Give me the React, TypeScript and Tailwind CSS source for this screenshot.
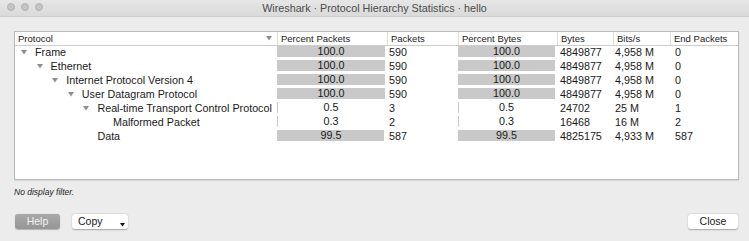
import React from "react";

type Row = {
  name: string;
  level: number;
  open: boolean;
  pp: string;
  ppBar: number;
  packets: string;
  pb: string;
  pbBar: number;
  bytes: string;
  bits: string;
  end: string;
};

const rows: Row[] = [
  { name: "Frame", level: 0, open: true, pp: "100.0", ppBar: 100, packets: "590", pb: "100.0", pbBar: 100, bytes: "4849877", bits: "4,958 M", end: "0" },
  { name: "Ethernet", level: 1, open: true, pp: "100.0", ppBar: 100, packets: "590", pb: "100.0", pbBar: 100, bytes: "4849877", bits: "4,958 M", end: "0" },
  { name: "Internet Protocol Version 4", level: 2, open: true, pp: "100.0", ppBar: 100, packets: "590", pb: "100.0", pbBar: 100, bytes: "4849877", bits: "4,958 M", end: "0" },
  { name: "User Datagram Protocol", level: 3, open: true, pp: "100.0", ppBar: 100, packets: "590", pb: "100.0", pbBar: 100, bytes: "4849877", bits: "4,958 M", end: "0" },
  { name: "Real-time Transport Control Protocol", level: 4, open: true, pp: "0.5", ppBar: 0.5, packets: "3", pb: "0.5", pbBar: 0.5, bytes: "24702", bits: "25 M", end: "1" },
  { name: "Malformed Packet", level: 5, open: false, pp: "0.3", ppBar: 0.3, packets: "2", pb: "0.3", pbBar: 0.3, bytes: "16468", bits: "16 M", end: "2" },
  { name: "Data", level: 4, open: false, pp: "99.5", ppBar: 99.5, packets: "587", pb: "99.5", pbBar: 99.5, bytes: "4825175", bits: "4,933 M", end: "587" },
];

const cols = "grid grid-cols-[262px_110px_71px_99px_56px_57px_68px]";

function Arrow() {
  return (
    <svg width="6" height="5" viewBox="0 0 6 5" className="shrink-0">
      <polygon points="0,0 6,0 3,4.5" fill="#8e8e8e" />
    </svg>
  );
}

function Bar({ value, text, width }: { value: number; text: string; width: string }) {
  return (
    <div className={`relative h-[11px] ${width}`}>
      <div className="absolute left-0 top-0 h-full bg-[#c9c9c9]" style={{ width: `${value}%` }} />
      <div className="relative text-center leading-[11px]">{text}</div>
    </div>
  );
}

export default function App() {
  return (
    <div className="w-[749px] h-[241px] bg-[#ececec] text-[#1a1a1a] overflow-hidden font-['Liberation_Sans',Arial,sans-serif]">
      {/* Title bar */}
      <div className="relative h-[17px] bg-gradient-to-b from-[#e6e6e6] to-[#dadada] border-b border-[#cfcfcf] flex items-center justify-center">
        <div className="absolute left-[7px] top-[3px] flex gap-[6px]">
          <div className="w-[8px] h-[8px] rounded-full bg-[#c4c4c4] border border-[#b3b3b3]" />
          <div className="w-[8px] h-[8px] rounded-full bg-[#c4c4c4] border border-[#b3b3b3]" />
          <div className="w-[8px] h-[8px] rounded-full bg-[#c4c4c4] border border-[#b3b3b3]" />
        </div>
        <span className="text-[10.75px] text-[#4b4b4b] leading-none">Wireshark · Protocol Hierarchy Statistics · hello</span>
      </div>

      {/* Tree table */}
      <div className="ml-[14px] mt-[14px] w-[725px] h-[149px] bg-white border border-[#b9b9b9] shadow-[0_1px_1px_rgba(0,0,0,0.08)]">
        <div className={`${cols} h-[14px] border-b border-[#cdcdcd] text-[9.5px] text-[#222] leading-[13px]`}>
          <div className="flex items-center justify-between pl-[3px] pr-[5px]">
            <span>Protocol</span>
            <Arrow />
          </div>
          <div className="border-l border-[#dcdcdc] pl-[3px]">Percent Packets</div>
          <div className="border-l border-[#dcdcdc] pl-[3px]">Packets</div>
          <div className="border-l border-[#dcdcdc] pl-[3px]">Percent Bytes</div>
          <div className="border-l border-[#dcdcdc] pl-[3px]">Bytes</div>
          <div className="border-l border-[#dcdcdc] pl-[3px]">Bits/s</div>
          <div className="border-l border-[#dcdcdc] pl-[3px]">End Packets</div>
        </div>

        {rows.map((r) => (
          <div key={r.name} className={`${cols} h-[14px] text-[10.75px]`}>
            <div className="flex items-center h-[12px] whitespace-nowrap" style={{ paddingLeft: 6 + r.level * 15.6 }}>
              <div className="w-[14px] shrink-0 flex items-center">{r.open && <Arrow />}</div>
              <span className="leading-[12px]">{r.name}</span>
            </div>
            <Bar value={r.ppBar} text={r.pp} width="w-[108px]" />
            <div className="pl-[2px] leading-[12px]">{r.packets}</div>
            <Bar value={r.pbBar} text={r.pb} width="w-[97px]" />
            <div className="pl-[3px] leading-[12px]">{r.bytes}</div>
            <div className="pl-[2px] leading-[12px]">{r.bits}</div>
            <div className="pl-[5px] leading-[12px]">{r.end}</div>
          </div>
        ))}
      </div>

      <div className="ml-[14px] mt-[6px] text-[8.5px] italic text-[#222]">No display filter.</div>

      {/* Buttons */}
      <div className="mt-[15px] flex items-center px-[15px]">
        <button className="w-[45px] h-[15px] rounded-[3px] bg-gradient-to-b from-[#a9a9a9] to-[#959595] text-[10.5px] text-[#f2f2f2] leading-none shadow-[0_0.5px_1px_rgba(0,0,0,0.25)]">
          Help
        </button>
        <button className="relative ml-[12px] w-[56px] h-[15px] rounded-[3px] bg-white text-[10.5px] text-left pl-[6px] leading-none shadow-[0_0.5px_1.5px_rgba(0,0,0,0.3)]">
          Copy
          <svg width="5" height="4" viewBox="0 0 5 4" className="absolute right-[3px] bottom-[2px]">
            <polygon points="0,0 5,0 2.5,3.5" fill="#111" />
          </svg>
        </button>
        <button className="ml-auto mr-[-4px] w-[50px] h-[15px] rounded-[3px] bg-white text-[10.5px] leading-none shadow-[0_0.5px_1.5px_rgba(0,0,0,0.3)]">
          Close
        </button>
      </div>
    </div>
  );
}
